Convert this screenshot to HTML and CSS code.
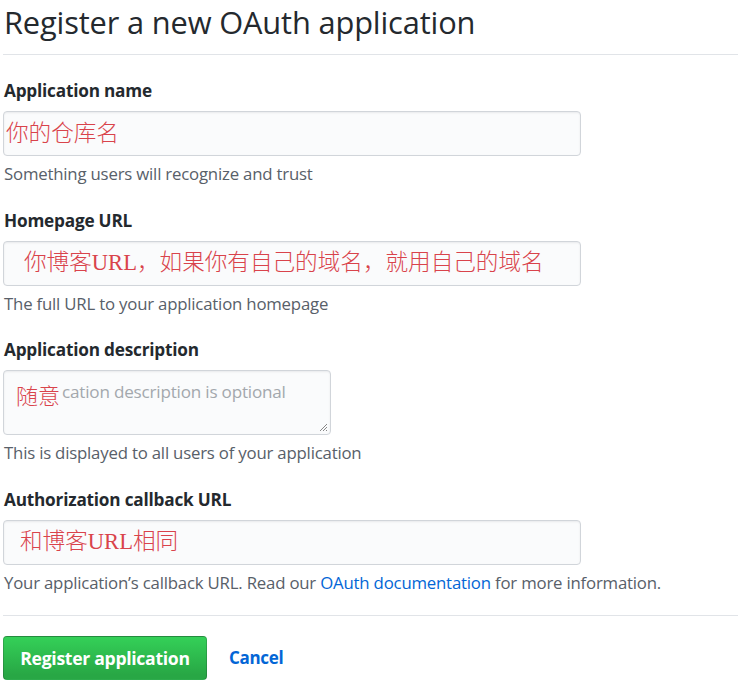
FILE: index.html
```
<!DOCTYPE html>
<html lang="en">
<head>
<meta charset="utf-8">
<title>Register a new OAuth application</title>
<link rel="stylesheet" href="styles.css">
</head>
<body>
<div class="page">
  <h2 class="title">Register a new OAuth application</h2>
  <form class="form">
    <div class="group">
      <label class="label">Application name</label>
      <div class="field">
        <span class="note note-name">你的仓库名</span>
      </div>
      <p class="hint">Something users will recognize and trust</p>
    </div>
    <div class="group">
      <label class="label">Homepage URL</label>
      <div class="field">
        <span class="note note-home">你博客URL，如果你有自己的域名，就用自己的域名</span>
      </div>
      <p class="hint">The full URL to your application homepage</p>
    </div>
    <div class="group">
      <label class="label">Application description</label>
      <div class="area">
        <span class="note note-desc">随意</span>
        <span class="placeholder">cation description is optional</span>
        <svg class="grip" width="9" height="9" viewBox="0 0 9 9"><path d="M8 1L1 8M8 4L4 8M8 7L7 8" stroke="#888" stroke-width="1"/></svg>
      </div>
      <p class="hint">This is displayed to all users of your application</p>
    </div>
    <div class="group last">
      <label class="label">Authorization callback URL</label>
      <div class="field">
        <span class="note note-cb">和博客URL相同</span>
      </div>
      <p class="hint">Your application’s callback URL. Read our <a class="link" href="#">OAuth documentation</a> for more information.</p>
    </div>
    <div class="actions">
      <button type="button" class="btn">Register application</button>
      <a class="cancel" href="#">Cancel</a>
    </div>
  </form>
</div>
</body>
</html>
```
FILE: styles.css
```
* { box-sizing: border-box; }
html, body { margin: 0; padding: 0; background: #fff; }
body {
  font-family: "Open Sans", "Noto Sans", sans-serif;
  color: #24292e;
  overflow: hidden;
}
.page { padding: 0 0 0 3px; width: 738px; }
.title {
  margin: 0;
  padding: 0 0 0 1px;
  height: 55px;
  font-size: 30.8px;
  font-weight: 400;
  line-height: 44px;
  border-bottom: 1px solid #e1e4e8;
  letter-spacing: -0.15px;
}
.form { padding-top: 25px; }
.group { margin-bottom: 24.5px; }
.group.last { margin-bottom: 21px; }
.label {
  display: block;
  font-size: 17.2px;
  font-weight: 700;
  line-height: 22px;
  padding-left: 1px;
  margin-bottom: 9px;
  letter-spacing: -0.2px;
}
.field {
  width: 578px;
  height: 45px;
  background: #fafbfc;
  border: 1px solid #d1d5da;
  border-radius: 4px;
  box-shadow: inset 0 1px 2px rgba(27,31,35,0.075);
  display: flex;
  align-items: center;
}
.area {
  position: relative;
  width: 328px;
  height: 65px;
  background: #fafbfc;
  border: 1px solid #d1d5da;
  border-radius: 4px;
  box-shadow: inset 0 1px 2px rgba(27,31,35,0.075);
  padding: 10px 0 0 12px;
  display: flex;
  align-items: flex-start;
}
.placeholder {
  font-size: 17.1px;
  color: #a3a8ad;
  line-height: 22px;
  letter-spacing: -0.2px;
  margin-left: 2px;
}
.note {
  font-family: "Liberation Serif", "Noto Sans CJK SC", serif;
  color: #d9434b;
  font-size: 22.6px;
  font-weight: 300;
  line-height: 26px;
}
.note-name { padding-left: 2px; }
.note-home { padding-left: 20px; }
.note-cb { padding-left: 16px; }
.note-desc {
  font-size: 22px;
  margin-top: 3px;
}
.grip { position: absolute; right: 2px; bottom: 2px; }
.hint {
  margin: 7px 0 0;
  font-size: 16.8px;
  line-height: 22px;
  color: #586069;
  padding-left: 1px;
  letter-spacing: -0.2px;
}
.link { color: #0366d6; text-decoration: none; }
.actions {
  border-top: 1px solid #e1e4e8;
  padding-top: 20px;
  display: flex;
  align-items: center;
}
.btn {
  font-family: inherit;
  width: 204px;
  height: 44px;
  border: 1px solid rgba(27,31,35,0.2);
  border-radius: 4px;
  background: linear-gradient(-180deg, #34d058 0%, #28a745 90%);
  color: #fff;
  font-size: 17.6px;
  font-weight: 700;
  letter-spacing: -0.3px;
  padding: 0;
}
.cancel {
  margin-left: 22px;
  color: #0366d6;
  font-size: 17px;
  font-weight: 700;
  text-decoration: none;
  letter-spacing: -0.3px;
}
```
